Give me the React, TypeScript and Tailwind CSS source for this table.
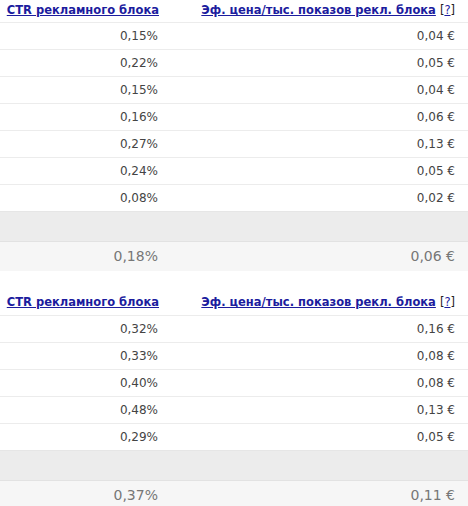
const first = [
  ['0,15%', '0,04 €'],
  ['0,22%', '0,05 €'],
  ['0,15%', '0,04 €'],
  ['0,16%', '0,06 €'],
  ['0,27%', '0,13 €'],
  ['0,24%', '0,05 €'],
  ['0,08%', '0,02 €'],
];

const second = [
  ['0,32%', '0,16 €'],
  ['0,33%', '0,08 €'],
  ['0,40%', '0,08 €'],
  ['0,48%', '0,13 €'],
  ['0,29%', '0,05 €'],
];

const font = { fontFamily: '"DejaVu Sans", Verdana, sans-serif' };

function StatsTable({ rows, total, tall }: { rows: string[][]; total: string[]; tall?: boolean }) {
  return (
    <div className="w-[468px]">
      <div className={`flex items-center text-[11.5px] font-bold text-[#222] ${tall ? 'h-[25px] pt-[1px]' : 'h-[22px]'}`}>
        <div className="w-[166px] pr-[7px] text-right">
          <a href="#" className="text-[#1c1c9e] underline">CTR рекламного блока</a>
        </div>
        <div className="flex-1 pr-[13px] text-right">
          <a href="#" className="text-[#1c1c9e] underline">Эф. цена/тыс. показов рекл. блока</a>{' '}
          <span className="font-normal">[<a href="#" className="text-[#1c1c9e] underline">?</a>]</span>
        </div>
      </div>
      {rows.map(([ctr, price], i) => (
        <div key={i} className="flex h-[27px] items-center border-t border-[#ececec] text-[12px] text-[#444]">
          <div className="w-[166px] pr-[8px] text-right">{ctr}</div>
          <div className="flex-1 pr-[13px] text-right">{price}</div>
        </div>
      ))}
      <div className="h-[30px] border-t border-[#e6e6e6] bg-[#ececec]" />
      <div className="flex h-[30px] items-center border-t border-[#e2e2e2] bg-[#f6f6f6] text-[14px] text-[#777]">
        <div className="w-[166px] pr-[8px] text-right">{total[0]}</div>
        <div className="flex-1 pr-[13px] text-right">{total[1]}</div>
      </div>
    </div>
  );
}

export default function App() {
  return (
    <div className="flex h-[506px] w-[468px] flex-col overflow-hidden bg-white" style={font}>
      <StatsTable rows={first} total={['0,18%', '0,06 €']} />
      <div className="h-[19px] shrink-0" />
      <StatsTable rows={second} total={['0,37%', '0,11 €']} tall />
    </div>
  );
}
